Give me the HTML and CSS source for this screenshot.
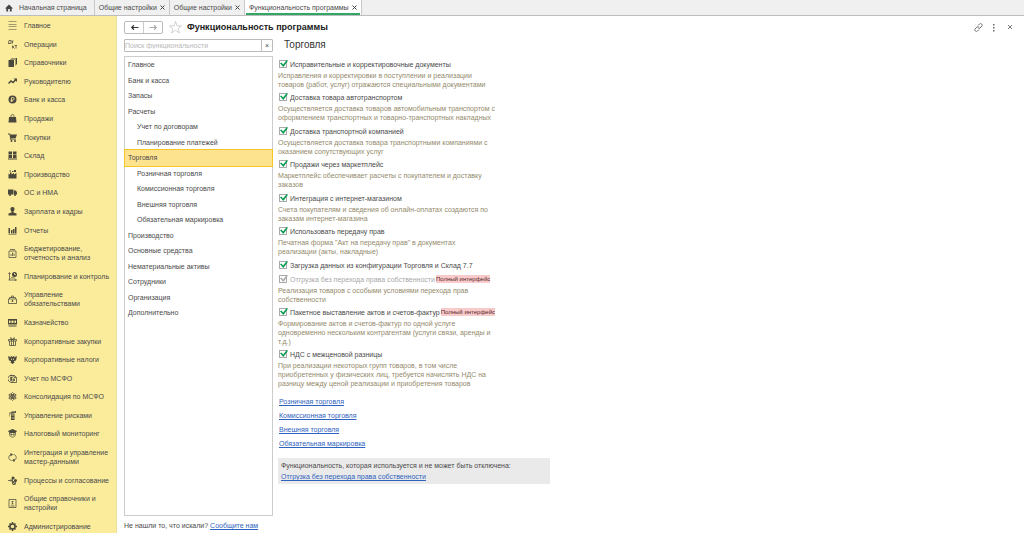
FILE: index.html
```html
<!DOCTYPE html>
<html lang="ru">
<head>
<meta charset="utf-8">
<title>Функциональность программы</title>
<link rel="stylesheet" href="styles.css">
</head>
<body>
<header class="tabs">
  <a class="tab tab-home" href="#"><svg class="home" viewBox="0 0 18 18"><path d="M9 1 0 10h3v7h4v-6h4v6h4v-7h3z"/></svg>Начальная страница</a>
  <div class="tab"><a href="#">Общие настройки</a><button class="tab-close" aria-label="Закрыть"><svg viewBox="0 0 10 10"><path d="m1 1 8 8M9 1 1 9"/></svg></button></div>
  <div class="tab"><a href="#">Общие настройки</a><button class="tab-close" aria-label="Закрыть"><svg viewBox="0 0 10 10"><path d="m1 1 8 8M9 1 1 9"/></svg></button></div>
  <div class="tab tab-active"><a href="#">Функциональность программы</a><button class="tab-close" aria-label="Закрыть"><svg viewBox="0 0 10 10"><path d="m1 1 8 8M9 1 1 9"/></svg></button></div>
</header>
<div class="workspace">
<nav class="sidebar">
  <a href="#"><svg viewBox="0 0 18 18"><path d="M1 1h16v1H1zM1 6h16v1H1zM1 11h16v1H1zM1 16h16v1H1z"/></svg><span>Главное</span></a>
  <a href="#"><svg viewBox="0 0 18 18"><path class="line" d="M0 7h7M1 6l1-5h4v5M7 2h4M9 2v5M9 11v6M13 11l-3 3 3 3M14 11h4M16 11v6"/></svg><span>Операции</span></a>
  <a href="#"><svg viewBox="0 0 18 18"><path d="M1 4h11v14H1z"/><path d="M4 2h11v13h-1V3H4zM6 0h12v13h-2V1H6z"/></svg><span>Справочники</span></a>
  <a href="#"><svg viewBox="0 0 18 18"><path class="bold" d="m1 13 5-5 4 3 6-6"/><path d="M11 3h7v7z"/></svg><span>Руководителю</span></a>
  <a href="#"><svg viewBox="0 0 18 18"><circle cx="9" cy="9" r="8"/><path class="cut" d="M7 14V5h3a2 2 0 0 1 0 5H5M5 12h5"/></svg><span>Банк и касса</span></a>
  <a href="#"><svg viewBox="0 0 18 18"><path d="M2 6h14l1 11H1z"/><path class="line" d="M6 9V4a3 3 0 0 1 6 0v5"/></svg><span>Продажи</span></a>
  <a href="#"><svg viewBox="0 0 18 18"><path d="M0 1h4l1 2h13l-3 8H6l1 2h9v1H5L3 3H0z"/><circle cx="7" cy="16" r="2"/><circle cx="14" cy="16" r="2"/></svg><span>Покупки</span></a>
  <a href="#"><svg viewBox="0 0 18 18"><path d="M1 1h7v6H1zM10 1h7v6h-7zM1 8h7v6H1zM10 8h7v6h-7zM0 15h18v2H0z"/></svg><span>Склад</span></a>
  <a href="#"><svg viewBox="0 0 18 18"><path d="M1 17V7l3 2V5h3v4l5-3v3l5-3v11zM3 1h3v2H3zM8 2h3v2H8zM12 0h4v4h-4z"/></svg><span>Производство</span></a>
  <a href="#"><svg viewBox="0 0 18 18"><path d="M0 3h11v10H0zM12 5h4l2 4v4h-6z"/><circle cx="4" cy="14" r="2"/><circle cx="14" cy="14" r="2"/></svg><span>ОС и НМА</span></a>
  <a href="#"><svg viewBox="0 0 18 18"><path d="M9 0c6 0 4 7 2 9v2l6 2v4H1v-4l6-2V9C5 7 3 0 9 0z"/></svg><span>Зарплата и кадры</span></a>
  <a href="#"><svg viewBox="0 0 18 18"><path d="M1 4h3v11H1zM6 8h3v7H6zM10 6h3v9h-3zM14 2h3v13h-3zM1 16h16v1H1z"/></svg><span>Отчеты</span></a>
  <a href="#"><svg viewBox="0 0 18 18"><path class="line" d="M2 4h14v13H2zM4 1h10M6 14v-4M9 14V7M12 14V9"/></svg><span>Бюджетирование,<br>отчетность и анализ</span></a>
  <a href="#"><svg viewBox="0 0 18 18"><path class="line" d="M3 16V2M1 4l2-3 2 3M1 16h15M14 14l3 2-3 2M5 13l4-3M8 12h6"/><circle cx="13" cy="5" r="5"/><path class="cut" d="M13 2v3h3"/></svg><span>Планирование и контроль</span></a>
  <a href="#"><svg viewBox="0 0 18 18"><path class="line" d="M1 8h16v9H1zM3 8V5h12v3M7 5V2h4v3M9 10v4M7 12h4"/></svg><span>Управление<br>обязательствами</span></a>
  <a href="#"><svg viewBox="0 0 18 18"><path fill-rule="evenodd" d="M0 2h18v11H0zM2 5v5h3V5zM13 5v5h3V5zM9 5a2 2 0 0 0 0 5 2 2 0 0 0 0-5zM1 15h16v2H1z"/></svg><span>Казначейство</span></a>
  <a href="#"><svg viewBox="0 0 18 18"><path class="line" d="M1 5h16v3H1zM3 8v9h12V8M7 5v12M11 5v12M9 5C1 2 6-1 9 5c3-6 8-3 0 0"/></svg><span>Корпоративные закупки</span></a>
  <a href="#"><svg viewBox="0 0 18 18"><path d="m5 1 4 3 4-3-1 4 6-3-2 9-4 1 1 3-4 3-4-3 1-3-4-1-2-9 6 3z"/><path class="cut" d="M7 7v3M11 7v3"/></svg><span>Корпоративные налоги</span></a>
  <a href="#"><svg viewBox="0 0 18 18"><path class="line" d="M4 3h9l4 4v10H6M11 15a7 7 0 1 1 0-11M12 2v5h5"/><path class="bold" d="M9 7H6v5h3M12 9v5"/></svg><span>Учет по МСФО</span></a>
  <a href="#"><svg viewBox="0 0 18 18"><g class="line"><ellipse cx="9" cy="9" rx="3" ry="8"/><ellipse cx="9" cy="9" rx="3" ry="8" transform="rotate(60 9 9)"/><ellipse cx="9" cy="9" rx="3" ry="8" transform="rotate(120 9 9)"/></g><circle cx="9" cy="9" r="2"/></svg><span>Консолидация по МСФО</span></a>
  <a href="#"><svg viewBox="0 0 18 18"><path d="M6 5h7v13H6zM7 1h5v3H7zM12 1l4-1v4l-4-1zM3 3h4v2H4v6H3z"/><path class="cut" d="M7 8h5M7 14h5"/></svg><span>Управление рисками</span></a>
  <a href="#"><svg viewBox="0 0 18 18"><path d="m9 0 9 4-3 4H3L0 4z"/><path class="line" d="M3 8v3c1 7 11 7 12 0V8M4 10h4v2H5M14 10h-4v2h3"/></svg><span>Налоговый мониторинг</span></a>
  <a href="#"><svg viewBox="0 0 18 18"><path class="line" d="M7 15C0 14 0 5 6 3M11 3c7 1 7 10 1 12"/><path d="m5 0 5 3-5 4zM13 11v7l-5-3z"/></svg><span>Интеграция и управление<br>мастер-данными</span></a>
  <a href="#"><svg viewBox="0 0 18 18"><path class="line" d="M0 9h8M9 4v9M9 4h4M9 13h4M5 6l3 3-3 3"/><circle cx="10" cy="4" r="3"/><circle cx="15" cy="9" r="3"/><circle cx="12" cy="14" r="4"/><path class="cut" d="m10 14 2 1 2-3"/></svg><span>Процессы и согласование</span></a>
  <a href="#"><svg viewBox="0 0 18 18"><path class="line" d="M2 1h14v16H2zM5 14h8M7 5h4M9 5v5M7 10h4"/></svg><span>Общие справочники и<br>настройки</span></a>
  <a href="#"><svg viewBox="0 0 18 18"><circle class="bold" cx="9" cy="9" r="5"/><path class="bold" d="M9 0v4M9 14v4M0 9h4M14 9h4M3 3l2 2M13 13l2 2M3 15l2-2M13 5l2-2"/></svg><span>Администрирование</span></a>
</nav>
<main class="page">
  <div class="titlebar">
    <div class="history"><button aria-label="Назад"><svg viewBox="0 0 16 12"><path d="M15 6H3M7 2 3 6l4 4"/></svg></button><button aria-label="Вперед" disabled><svg viewBox="0 0 16 12"><path d="M1 6h12M9 2l4 4-4 4"/></svg></button></div>
    <button class="favorite" aria-label="В избранное"><svg viewBox="0 0 24 24"><path d="m12 1 3 8h8l-6 5 2 8-7-5-7 5 2-8-6-5h8z"/></svg></button>
    <h1>Функциональность программы</h1>
    <div class="actions">
      <button aria-label="Ссылка"><svg viewBox="0 0 18 18"><path d="m8 5 3-3c3-3 7 2 5 4l-4 4c-2 2-4 0-4-1M10 13l-3 3c-3 3-7-2-5-4l4-4c2-2 4 0 4 1"/></svg></button>
      <button aria-label="Меню"><svg viewBox="0 0 18 18"><path class="dots" d="M6 2h3v3H6zM6 8h3v3H6zM6 14h3v3H6z"/></svg></button>
      <button aria-label="Закрыть"><svg viewBox="0 0 18 18"><path d="m4 4 8 8M12 4l-8 8"/></svg></button>
    </div>
  </div>
  <div class="columns">
    <section class="sections">
      <div class="search"><input type="text" placeholder="Поиск функциональности" aria-label="Поиск функциональности"><button aria-label="Очистить">×</button></div>
      <ul class="tree">
        <li><a href="#">Главное</a></li>
        <li><a href="#">Банк и касса</a></li>
        <li><a href="#">Запасы</a></li>
        <li><a href="#">Расчеты</a></li>
        <li class="nested"><a href="#">Учет по договорам</a></li>
        <li class="nested"><a href="#">Планирование платежей</a></li>
        <li class="selected"><a href="#">Торговля</a></li>
        <li class="nested"><a href="#">Розничная торговля</a></li>
        <li class="nested"><a href="#">Комиссионная торговля</a></li>
        <li class="nested"><a href="#">Внешняя торговля</a></li>
        <li class="nested"><a href="#">Обязательная маркировка</a></li>
        <li><a href="#">Производство</a></li>
        <li><a href="#">Основные средства</a></li>
        <li><a href="#">Нематериальные активы</a></li>
        <li><a href="#">Сотрудники</a></li>
        <li><a href="#">Организация</a></li>
        <li><a href="#">Дополнительно</a></li>
      </ul>
      <p class="feedback">Не нашли то, что искали? <a class="link" href="#">Сообщите нам</a></p>
    </section>
    <section class="details">
      <h2>Торговля</h2>
      <div class="options">
        <div class="option"><label><input type="checkbox" checked>Исправительные и корректировочные документы</label><p>Исправления и корректировки в поступлении и реализации<br>товаров (работ, услуг) отражаются специальными документами</p></div>
        <div class="option"><label><input type="checkbox" checked>Доставка товара автотранспортом</label><p>Осуществляется доставка товаров автомобильным транспортом с<br>оформлением транспортных и товарно-транспортных накладных</p></div>
        <div class="option"><label><input type="checkbox" checked>Доставка транспортной компанией</label><p>Осуществляется доставка товара транспортными компаниями с<br>оказанием сопутствующих услуг</p></div>
        <div class="option"><label><input type="checkbox" checked>Продажи через маркетплейс</label><p>Маркетплейс обеспечивает расчеты с покупателем и доставку<br>заказов</p></div>
        <div class="option"><label><input type="checkbox" checked>Интеграция с интернет-магазином</label><p>Счета покупателям и сведения об онлайн-оплатах создаются по<br>заказам интернет-магазина</p></div>
        <div class="option"><label><input type="checkbox" checked>Использовать передачу прав</label><p>Печатная форма "Акт на передачу прав" в документах<br>реализации (акты, накладные)</p></div>
        <div class="option"><label><input type="checkbox" checked>Загрузка данных из конфигурации Торговля и Склад 7.7</label></div>
        <div class="option"><label class="off"><input type="checkbox" checked disabled>Отгрузка без перехода права собственности<mark>Полный интерфейс</mark></label><p>Реализация товаров с особыми условиями перехода прав<br>собственности</p></div>
        <div class="option"><label><input type="checkbox" checked>Пакетное выставление актов и счетов-фактур<mark>Полный интерфейс</mark></label><p>Формирование актов и счетов-фактур по одной услуге<br>одновременно нескольким контрагентам (услуги связи, аренды и<br>т.д.)</p></div>
        <div class="option"><label><input type="checkbox" checked>НДС с межценовой разницы</label><p>При реализации некоторых групп товаров, в том числе<br>приобретенных у физических лиц, требуется начислять НДС на<br>разницу между ценой реализации и приобретения товаров</p></div>
      </div>
      <div class="related">
        <a class="link" href="#">Розничная торговля</a>
        <a class="link" href="#">Комиссионная торговля</a>
        <a class="link" href="#">Внешняя торговля</a>
        <a class="link" href="#">Обязательная маркировка</a>
      </div>
      <div class="locked"><p>Функциональность, которая используется и не может быть отключена:</p><a class="link" href="#">Отгрузка без перехода права собственности</a></div>
    </section>
  </div>
</main>
</div>
</body>
</html>
```
FILE: styles.css
```css
* { box-sizing: border-box; }
body {
  margin: 0;
  min-height: 100vh;
  display: flex;
  flex-direction: column;
  background: #fff;
  color: #4a4a4a;
  font: 7px/9px "Liberation Sans", Arial, sans-serif;
}
h1, h2, p, ul { margin: 0; padding: 0; }
a { color: inherit; text-decoration: none; }
button, input { font: inherit; color: inherit; margin: 0; padding: 0; }
button { border: 0; background: none; }

.tabs { display: flex; height: 16px; background: #f0f0f0; border-bottom: 1px solid #bdbdbd; }
.tab { display: flex; align-items: center; gap: 3px; padding: 0 4px; border-right: 1px solid #c8c8c8; }
.tab-home { gap: 6px; padding: 0 7px 0 5px; }
.home { width: 8px; height: 8px; fill: #444; }
.tab-close { width: 5px; height: 5px; }
.tab-close svg { display: block; width: 5px; height: 5px; fill: none; stroke: #444; stroke-width: 2; }
.tab-active { background: linear-gradient(#2fa866, #2fa866) center bottom / calc(100% - 2px) 2px no-repeat #fff; }

.workspace { flex: 1; display: flex; }
.sidebar {
  width: 117px;
  display: flex;
  flex-direction: column;
  justify-content: space-between;
  padding: 5px 0 2px 8px;
  background: #fbec9c;
  border-right: 1px solid #ece0a0;
}
.sidebar a { display: flex; align-items: center; gap: 7px; white-space: nowrap; }
.sidebar svg { width: 9px; height: 9px; flex: none; fill: #4b483c; }
.sidebar .line { fill: none; stroke: #4b483c; stroke-width: 1.5; }
.sidebar .bold { fill: none; stroke: #4b483c; stroke-width: 3; }
.sidebar .cut { fill: none; stroke: #fbec9c; stroke-width: 1.5; }

.page { flex: 1; display: flex; flex-direction: column; padding: 5px 7px 3px; }
.titlebar { display: flex; align-items: center; height: 13px; }
.history { display: flex; width: 39px; height: 13px; border: 1px solid #bbb; border-radius: 2px; }
.history button { flex: 1; display: flex; align-items: center; justify-content: center; }
.history button + button { border-left: 1px solid #ccc; }
.history svg { width: 9px; height: 7px; fill: none; stroke: #333; stroke-width: 2; }
.history button:disabled svg { stroke: #aaa; }
.favorite { width: 13px; height: 13px; margin: 0 5px 0 6px; }
.favorite svg { display: block; width: 13px; height: 13px; fill: none; stroke: #aaa; stroke-width: 1; }
h1 { font-size: 9px; line-height: 13px; color: #222; }
.actions { display: flex; gap: 7px; margin-left: auto; padding-right: 2px; }
.actions button { width: 9px; height: 9px; }
.actions svg { display: block; width: 9px; height: 9px; fill: none; stroke: #777; stroke-width: 2; }
.actions .dots { fill: #666; stroke: none; }

.columns { flex: 1; display: flex; gap: 5px; padding-top: 5px; }
.sections { width: 149px; display: flex; flex-direction: column; }
.search { display: flex; height: 13px; border: 1px solid #bbb; border-radius: 1px; }
.search input { flex: 1; min-width: 0; border: 0; outline: 0; }
.search input::placeholder { color: #b8b8b8; }
.search button { width: 11px; border-left: 1px solid #bbb; }
.tree { flex: 1; margin-top: 4px; border: 1px solid #ccc; list-style: none; }
.tree li { height: 15px; padding-left: 3px; line-height: 15px; }
.tree li:nth-child(odd) { height: 16px; }
.tree .nested { padding-left: 12px; }
.tree .selected { background: #fee38f; outline: 1px solid #f5c52f; }
.feedback { margin-top: 5px; line-height: 9px; }
.link { color: #2f62bd; text-decoration: underline; }

.details { flex: 1; }
h2 { padding-left: 6px; font-size: 10px; line-height: 12px; font-weight: normal; color: #333; }
.options { padding-top: 7px; }
.option { margin-bottom: 2px; color: #938a6c; }
.option:nth-child(even):not(:nth-child(n+7)) { margin-bottom: 3px; }
.option label { display: flex; align-items: center; height: 12px; color: #4a4a4a; }
.option p { margin-top: 1px; }
.option .off { color: #a8a8a8; }
.option input { appearance: none; width: 8px; height: 8px; margin: 0 3px 0 1px; border: 1px solid #aaa; }
.option input::before {
  content: "";
  display: block;
  width: 8px;
  height: 7px;
  margin-top: -1px;
  background: #079b50;
  clip-path: polygon(0 45%, 18% 35%, 38% 65%, 85% 0, 100% 10%, 42% 100%);
}
.option input:disabled::before { background: #aaa; }
mark { margin-left: 1px; line-height: 8px; font-size: 6px; color: #54292c; background: #f9caca; }
.related { display: flex; flex-direction: column; align-items: flex-start; gap: 5px; padding: 7px 0 0 1px; }
.locked { max-width: 272px; margin-top: 10px; padding: 3px; background: #eaeaea; }
.locked p { margin-bottom: 2px; }
```
